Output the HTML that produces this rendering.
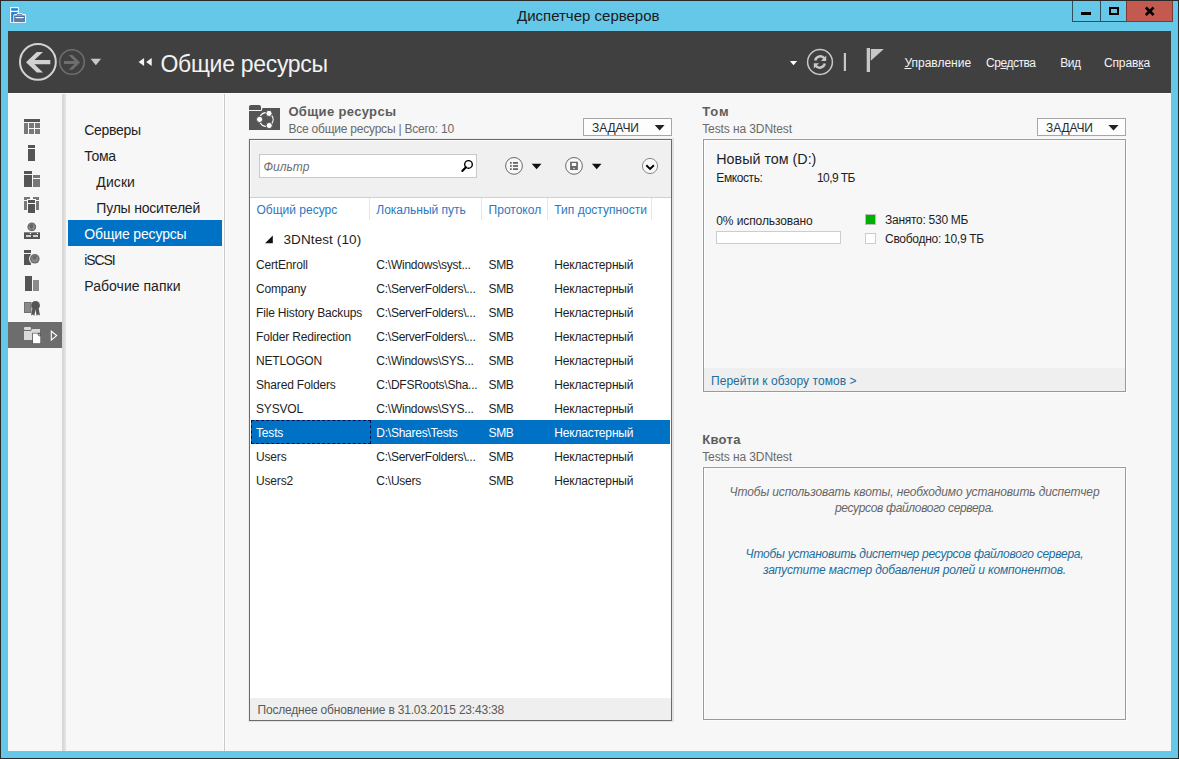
<!DOCTYPE html>
<html><head><meta charset="utf-8">
<style>
*{margin:0;padding:0;box-sizing:border-box}
html,body{width:1179px;height:759px;overflow:hidden;background:#2a2a2a;font-family:"Liberation Sans",sans-serif}
.a{position:absolute}
.t{position:absolute;white-space:nowrap;font-family:"Liberation Sans",sans-serif}
#frame{position:absolute;left:1px;top:1px;width:1177px;height:757px;background:#66c8e8}
#content{position:absolute;left:8px;top:31px;width:1163px;height:720px;background:#f7f7f7;overflow:hidden}
#hdr{position:absolute;left:8px;top:31px;width:1163px;height:62px;background:#404040}
.wb{position:absolute;top:1px;height:21px;border:1px solid #2f4f5a;border-top:0}
.mn{top:56.9px;font-size:12px;line-height:12px;color:#f4f4f4}
.mn u{text-decoration-thickness:1px;text-underline-offset:1px}
.nv{font-size:14px;line-height:14px;letter-spacing:-0.3px;color:#1e1e1e}
.ch{top:204.1px;font-size:12px;line-height:12px;color:#2b78c0}
.rw{font-size:12px;line-height:12px;letter-spacing:-0.17px}
.qt{left:704px;width:421px;text-align:center;font-size:12px;line-height:12px;font-style:italic}
</style></head><body>
<div id="frame"></div>
<!-- title bar icon -->
<svg class="a" style="left:8px;top:5px" width="20" height="20" viewBox="8 5 20 20">
  <rect x="10.1" y="7.1" width="8.7" height="15.6" fill="#fff"/>
  <rect x="11.2" y="8.2" width="6.7" height="2.5" fill="#1a7fd8"/>
  <rect x="11.2" y="12.1" width="6.7" height="9.8" fill="#1a7fd8"/>
  <path d="M13.3,15.5 Q13.3,14.3 14.8,14.1 L16.3,13.9 Q16.8,12.9 18.5,12.9 L20.5,12.9 Q22.2,12.9 22.6,13.9 L24.4,14.1 Q25.9,14.3 25.9,15.5 L25.9,22.65 L13.3,22.65 Z" fill="#fff"/>
  <rect x="14.2" y="15.4" width="10.7" height="6.5" fill="#4c6aa6"/>
  <path d="M17.2,15.4 L17.2,14.4 L21.8,14.4 L21.8,15.4" fill="none" stroke="#4c6aa6" stroke-width="0.9"/>
  <path d="M15,17.1 L24.1,17.1 L23.2,18.3 L15.9,18.3 Z" fill="#fff"/>
  <rect x="14.5" y="18.8" width="10" height="2.8" fill="#5f8a9a" opacity="0.7"/>
</svg>
<div class="t" style="left:517px;top:8px;font-size:15px;line-height:15px;color:#1a1a1a">Диспетчер серверов</div>
<!-- window buttons -->
<div class="wb" style="left:1072px;width:29px;background:#66c8e8"></div>
<div class="wb" style="left:1100px;width:27px;background:#66c8e8"></div>
<div class="wb" style="left:1126px;width:47px;background:#c45a4f;border-color:#7a3a33"></div>
<div class="a" style="left:1081px;top:12px;width:10px;height:3px;background:#000"></div>
<div class="a" style="left:1109px;top:7px;width:10px;height:8px;border:2px solid #000"></div>
<svg class="a" style="left:1144px;top:6px" width="12" height="11" viewBox="1144 6 12 11"><path d="M1145.8,7.6 L1153.6,14.9 M1153.6,7.6 L1145.8,14.9" stroke="#000" stroke-width="2.7"/></svg>

<div id="content"></div>
<div id="hdr"></div>
    <svg class="a" style="left:8px;top:31px" width="1163" height="62" viewBox="8 31 1163 62">
      <circle cx="37.9" cy="61.9" r="17.9" fill="none" stroke="#d2d2d2" stroke-width="2"/>
      <path d="M26,62.2 L36.8,52 L43,52 L34.4,60.1 L50.3,60.1 L50.3,64.3 L34.4,64.3 L43,72.5 L36.8,72.5 Z" fill="#d2d2d2"/>
      <circle cx="72" cy="62" r="12.3" fill="none" stroke="#6e6e6e" stroke-width="1.6"/>
      <path d="M80,62.4 L72.5,55 L68.6,55 L74.6,60.9 L63.9,60.9 L63.9,64 L74.6,64 L68.6,69.8 L72.5,69.8 Z" fill="#6e6e6e"/>
      <path d="M90.6,58.8 L101.1,58.8 L95.85,65.2 Z" fill="#c8c8c8"/>
      <path d="M138.6,62 L144.1,57.9 L144.1,66.1 Z M146.2,62 L151.7,57.9 L151.7,66.1 Z" fill="#f4f4f4"/>
      <path d="M789.9,60.9 L797.1,60.9 L793.5,65.3 Z" fill="#fff"/>
      <circle cx="820" cy="62" r="12.4" fill="none" stroke="#c8c8c8" stroke-width="1.5"/>
      <path d="M815.2,60.5 A5.2,5.2 0 0 1 824.5,58.5" fill="none" stroke="#c8c8c8" stroke-width="2.4"/>
      <path d="M826.2,55.6 L826.2,61 L821,61 Z" fill="#c8c8c8"/>
      <path d="M824.8,63.5 A5.2,5.2 0 0 1 815.5,65.5" fill="none" stroke="#c8c8c8" stroke-width="2.4"/>
      <path d="M813.8,68.6 L813.8,63.2 L819,63.2 Z" fill="#c8c8c8"/>
      <rect x="843.8" y="53" width="2.2" height="18" fill="#c8c8c8"/>
      <rect x="866.7" y="48" width="3.3" height="24" fill="#c8c8c8"/>
      <path d="M870.8,49 L883.8,49 L870.8,60.7 Z" fill="#c8c8c8"/>
    </svg>
    <div class="t" style="left:160.5px;top:53px;font-size:23px;line-height:23px;letter-spacing:-0.3px;color:#f2f2f2">Общие ресурсы</div>
    <div class="t mn" style="left:904.4px"><u>У</u>правление</div>
    <div class="t mn" style="left:986px;letter-spacing:-0.45px">Ср<u>е</u>дства</div>
    <div class="t mn" style="left:1060.2px;letter-spacing:-0.5px">Ви<u>д</u></div>
    <div class="t mn" style="left:1104px;letter-spacing:-0.15px">Справ<u>к</u>а</div>

<!-- left icon rail -->
<div class="a" style="left:8px;top:93px;width:1163px;height:1px;background:#fbfbfb"></div>
<div class="a" style="left:62px;top:94px;width:4px;height:657px;background:linear-gradient(90deg,#d3d3d3,#dedede 60%,#e6e6e6)"></div>
<div class="a" style="left:223px;top:94px;width:3px;height:657px;background:linear-gradient(90deg,#fdfdfd 0,#fdfdfd 1px,#c9c9c9 1px,#c9c9c9 2px,#fdfdfd 2px)"></div>
<div class="a" style="left:8px;top:322px;width:54px;height:26px;background:#6d6d6d"></div>
<svg class="a" style="left:8px;top:94px" width="54" height="260" viewBox="8 94 54 260">
  <g fill="#555">
    <rect x="24" y="119" width="16" height="3"/>
    <rect x="28" y="145" width="7" height="3"/><rect x="28" y="149" width="7" height="12"/>
    <rect x="24" y="171" width="8" height="3"/><rect x="24" y="175" width="8" height="12"/>
    <rect x="28" y="200" width="7" height="3"/><rect x="28" y="204" width="7" height="9"/>
    <rect x="24" y="232" width="16" height="7"/>
    <rect x="24" y="250" width="7" height="3"/><rect x="24" y="254" width="7" height="11"/>
    <rect x="25" y="276" width="7" height="15"/>
    <circle cx="35.5" cy="305.4" r="4.4"/>
    <path d="M32.3,308.5 L31,315.5 L33,314.5 L34.3,316 L35.5,309.5 Z M38.7,308.5 L40,315.5 L38,314.5 L36.7,316 L35.5,309.5 Z"/>
  </g>
  <g fill="#787878">
    <rect x="24" y="123" width="4" height="11"/>
    <rect x="29" y="123" width="5" height="5"/><rect x="29" y="129" width="5" height="5"/>
    <rect x="35" y="123" width="5" height="5"/><rect x="35" y="129" width="5" height="5"/>
    <rect x="33" y="175" width="7" height="3"/><rect x="33" y="179" width="7" height="8"/>
    <rect x="24" y="197" width="6" height="3"/><rect x="24" y="201" width="3" height="9"/>
    <rect x="33" y="197" width="6" height="3"/><rect x="36" y="201" width="3" height="9"/>
    <rect x="27" y="199" width="9" height="15" fill="#fafafa"/>
    <rect x="28" y="200" width="7" height="3" fill="#555"/><rect x="28" y="204" width="7" height="9" fill="#555"/>
    <circle cx="31.8" cy="226.9" r="5.4" fill="#fbfbfb"/>
    <circle cx="31.8" cy="226.9" r="4.4" fill="#6a6a6a"/>
    <circle cx="31.8" cy="226.9" r="3.2" fill="#8a8a8a"/>
    <rect x="33" y="280" width="6" height="11" fill="#8a8a8a"/>
    <rect x="24.5" y="302.5" width="6.5" height="10" fill="#8a8a8a" stroke="#707070" stroke-width="1"/>
  </g>
  <g fill="#d2d2d2">
    <rect x="26" y="235" width="5" height="2"/><rect x="33" y="235" width="5" height="2"/>
  </g>
  <path d="M29,225.5 L31,224 L33,224.5 L33.5,226.5 L32,228 L32.5,230 L30.5,228 Z" fill="#555" opacity="0.7"/>
  <rect x="24" y="231.5" width="16" height="0.8" fill="#fbfbfb"/>
  <circle cx="30.4" cy="233.4" r="0.7" fill="#fff"/><circle cx="37.4" cy="233.4" r="0.7" fill="#fff"/>
  <circle cx="34.8" cy="258.8" r="5.8" fill="#f7f7f7"/>
  <circle cx="34.8" cy="258.8" r="4.8" fill="#6a6a6a"/>
  <circle cx="34.8" cy="258.8" r="3.5" fill="#8a8a8a"/>
  <path d="M32,257.5 L34,255.5 L37,256 L36,259 L34,260 L35,262 Z" fill="#555" opacity="0.6"/>
  <!-- selected icon -->
  <rect x="24" y="327" width="7" height="3" rx="1" fill="#dadada"/>
  <path d="M24,331 L31,331 L32,329 L40,329 L40,340 L24,340 Z" fill="#dadada"/>
  <path d="M32.2,332.8 L41,332.8 L41,344 L32.2,344 Z" fill="#5a5a5a"/><path d="M33,333.4 L37.6,333.4 Q37.6,336.2 40.3,336.2 L40.3,343.3 L33,343.3 Z" fill="#fff"/><circle cx="39.3" cy="334.8" r="0.8" fill="#ddd"/>
  <path d="M51.3,331.2 L56.7,335.6 L51.3,340 Z" fill="none" stroke="#fff" stroke-width="1.1"/>
</svg>
<!-- nav -->
<div class="a" style="left:68px;top:220px;width:154px;height:26px;background:#0072c6"></div>
<div class="t nv" style="left:84.3px;top:123.2px">Серверы</div>
<div class="t nv" style="left:84.3px;top:149.2px">Тома</div>
<div class="t nv" style="left:96.3px;top:175.2px;letter-spacing:0.1px">Диски</div>
<div class="t nv" style="left:96.3px;top:201.2px;letter-spacing:-0.2px">Пулы носителей</div>
<div class="t nv" style="left:84.3px;top:227.2px;color:#fff;letter-spacing:-0.15px">Общие ресурсы</div>
<div class="t nv" style="left:84.3px;top:253.2px;letter-spacing:-1.1px">iSCSI</div>
<div class="t nv" style="left:84.3px;top:279.2px;letter-spacing:0.03px">Рабочие папки</div>

<!-- left main panel -->
<svg class="a" style="left:249px;top:105px" width="31" height="25" viewBox="249 105 31 25">
  <path d="M249,107 Q249,105 251,105 L259,105 Q261,105 261,107 L261,110 L249,110 Z" fill="#555"/>
  <path d="M249,111 L261.5,111 L262.5,108 L280,108 L280,130 L249,130 Z" fill="#555"/>
  <path d="M260.14,116.62 A6.8,6.8 0 0 1 266.18,112.7 M271.43,115.04 A6.8,6.8 0 0 1 271.58,123.78 M266.42,126.3 A6.8,6.8 0 0 1 260.14,122.38" fill="none" stroke="#fff" stroke-width="1.2"/>
  <circle cx="269" cy="113.4" r="3.1" fill="#fff" stroke="#555" stroke-width="1"/>
  <circle cx="259.6" cy="119.4" r="3.1" fill="#fff" stroke="#555" stroke-width="1"/>
  <circle cx="269.2" cy="125.5" r="3.1" fill="#fff" stroke="#555" stroke-width="1"/>
</svg>
<div class="t" style="left:288.4px;top:104.7px;font-size:13px;line-height:13px;font-weight:bold;color:#5c5c5c;letter-spacing:0.35px">Общие ресурсы</div>
<div class="t" style="left:288.4px;top:122.6px;font-size:12px;line-height:12px;color:#6a6a6a;letter-spacing:-0.22px">Все общие ресурсы | Всего: 10</div>
<div class="a" style="left:583px;top:118px;width:89px;height:18px;background:#fdfdfd;border:1px solid #a6a6a6"></div>
<div class="t" style="left:592px;top:121.7px;font-size:12px;line-height:12px;color:#2a2a2a;letter-spacing:-0.1px">ЗАДАЧИ</div>
<svg class="a" style="left:654px;top:124px" width="12" height="8"><path d="M0.7,1 L10.6,1 L5.65,6.5 Z" fill="#222"/></svg>

<div class="a" style="left:248px;top:138px;width:426px;height:584px;border:1px solid #ececec;border-right-width:2px;border-bottom-width:2px;border-right-color:#e2e2e2;border-bottom-color:#e2e2e2"></div>
<div class="a" style="left:249px;top:139px;width:423px;height:582px;background:#fff;border:1px solid #6b6b6b"></div>
<div class="a" style="left:250px;top:140px;width:421px;height:57px;background:#f0f0f0;border-top:1px solid #fbfbfb;border-left:1px solid #fbfbfb"></div>
<div class="a" style="left:250px;top:197px;width:421px;height:1px;background:#cfcfcf"></div>
<div class="a" style="left:259px;top:154px;width:218px;height:24px;background:#fff;border:1px solid #c9c9c9"></div>
<div class="t" style="left:263.5px;top:161px;font-size:12px;line-height:12px;font-style:italic;color:#6e6e6e">Фильтр</div>
<svg class="a" style="left:455px;top:155px" width="22" height="22" viewBox="455 155 22 22">
  <circle cx="468.5" cy="164.4" r="3.8" fill="none" stroke="#000" stroke-width="1.4"/>
  <path d="M465.9,167.2 L462.3,170.9" stroke="#000" stroke-width="2.1" stroke-linecap="round"/>
</svg>
<svg class="a" style="left:500px;top:150px" width="165" height="32" viewBox="500 150 165 32">
  <circle cx="514" cy="165.9" r="8.4" fill="#f7f7f7" stroke="#6a6a6a" stroke-width="1"/>
  <g fill="#555"><rect x="510" y="162.1" width="1.7" height="1.6"/><rect x="510" y="165.2" width="1.7" height="1.6"/><rect x="510" y="168.3" width="1.7" height="1.6"/>
  <rect x="513" y="162.1" width="5" height="1.6"/><rect x="513" y="165.2" width="5" height="1.6"/><rect x="513" y="168.3" width="5" height="1.6"/></g>
  <path d="M531.7,163.8 L541.5,163.8 L536.6,169.3 Z" fill="#111"/>
  <circle cx="574" cy="165.9" r="8.4" fill="#f7f7f7" stroke="#6a6a6a" stroke-width="1"/>
  <path d="M570.1,161.8 L577.9,161.8 L577.9,169.9 L570.1,169.9 Z M571.8,163 L571.8,166 L576.2,166 L576.2,163 Z M573.3,167.7 L573.3,169.1 L574.7,169.1 L574.7,167.7 Z" fill="#666" fill-rule="evenodd"/>
  <path d="M591.9,163.8 L601.5,163.8 L596.7,169.3 Z" fill="#111"/>
  <circle cx="650" cy="166" r="7.6" fill="#f9f9f9" stroke="#8a8a8a" stroke-width="1"/>
  <path d="M646.3,165.2 L650.1,168.9 L653.9,165.2" fill="none" stroke="#000" stroke-width="1.9"/>
</svg>
<!-- column headers -->
<div class="a" style="left:369px;top:198px;width:1px;height:22px;background:#e6e6e6"></div>
<div class="a" style="left:481px;top:198px;width:1px;height:22px;background:#e6e6e6"></div>
<div class="a" style="left:547px;top:198px;width:1px;height:22px;background:#e6e6e6"></div>
<div class="a" style="left:651px;top:198px;width:1px;height:22px;background:#e6e6e6"></div>
<div class="t ch" style="left:256.5px">Общий ресурс</div>
<div class="t ch" style="left:376.3px">Локальный путь</div>
<div class="t ch" style="left:488.6px">Протокол</div>
<div class="t ch" style="left:554.3px">Тип доступности</div>
<svg class="a" style="left:264px;top:234px" width="10" height="10"><path d="M1.1,9.3 L8.8,9.3 L8.8,1.6 Z" fill="#111"/></svg>
<div class="t" style="left:283.5px;top:233px;font-size:13.5px;line-height:13.5px;color:#1e1e1e;letter-spacing:0.1px">3DNtest (10)</div>
<div class="a" style="left:251px;top:420px;width:419px;height:24px;background:#0072c6"></div>
<div class="a" style="left:251px;top:420px;width:120px;height:24px;border:1px dashed #0a1050"></div>
<div class="t rw" style="left:256px;top:258.5px;color:#1e1e1e">CertEnroll</div><div class="t rw" style="letter-spacing:-0.24px;left:376.3px;top:258.5px;color:#1e1e1e">C:\Windows\syst...</div><div class="t rw" style="letter-spacing:-0.4px;left:488.6px;top:258.5px;color:#1e1e1e">SMB</div><div class="t rw" style="left:554.3px;top:258.5px;color:#1e1e1e">Некластерный</div>
<div class="t rw" style="left:256px;top:282.5px;color:#1e1e1e">Company</div><div class="t rw" style="letter-spacing:-0.24px;left:376.3px;top:282.5px;color:#1e1e1e">C:\ServerFolders\...</div><div class="t rw" style="letter-spacing:-0.4px;left:488.6px;top:282.5px;color:#1e1e1e">SMB</div><div class="t rw" style="left:554.3px;top:282.5px;color:#1e1e1e">Некластерный</div>
<div class="t rw" style="left:256px;top:306.5px;color:#1e1e1e">File History Backups</div><div class="t rw" style="letter-spacing:-0.24px;left:376.3px;top:306.5px;color:#1e1e1e">C:\ServerFolders\...</div><div class="t rw" style="letter-spacing:-0.4px;left:488.6px;top:306.5px;color:#1e1e1e">SMB</div><div class="t rw" style="left:554.3px;top:306.5px;color:#1e1e1e">Некластерный</div>
<div class="t rw" style="left:256px;top:330.5px;color:#1e1e1e">Folder Redirection</div><div class="t rw" style="letter-spacing:-0.24px;left:376.3px;top:330.5px;color:#1e1e1e">C:\ServerFolders\...</div><div class="t rw" style="letter-spacing:-0.4px;left:488.6px;top:330.5px;color:#1e1e1e">SMB</div><div class="t rw" style="left:554.3px;top:330.5px;color:#1e1e1e">Некластерный</div>
<div class="t rw" style="left:256px;top:354.5px;color:#1e1e1e">NETLOGON</div><div class="t rw" style="letter-spacing:-0.24px;left:376.3px;top:354.5px;color:#1e1e1e">C:\Windows\SYS...</div><div class="t rw" style="letter-spacing:-0.4px;left:488.6px;top:354.5px;color:#1e1e1e">SMB</div><div class="t rw" style="left:554.3px;top:354.5px;color:#1e1e1e">Некластерный</div>
<div class="t rw" style="left:256px;top:378.5px;color:#1e1e1e">Shared Folders</div><div class="t rw" style="letter-spacing:-0.24px;left:376.3px;top:378.5px;color:#1e1e1e">C:\DFSRoots\Sha...</div><div class="t rw" style="letter-spacing:-0.4px;left:488.6px;top:378.5px;color:#1e1e1e">SMB</div><div class="t rw" style="left:554.3px;top:378.5px;color:#1e1e1e">Некластерный</div>
<div class="t rw" style="left:256px;top:402.5px;color:#1e1e1e">SYSVOL</div><div class="t rw" style="letter-spacing:-0.24px;left:376.3px;top:402.5px;color:#1e1e1e">C:\Windows\SYS...</div><div class="t rw" style="letter-spacing:-0.4px;left:488.6px;top:402.5px;color:#1e1e1e">SMB</div><div class="t rw" style="left:554.3px;top:402.5px;color:#1e1e1e">Некластерный</div>
<div class="t rw" style="left:256px;top:426.5px;color:#fff">Tests</div><div class="t rw" style="letter-spacing:-0.24px;left:376.3px;top:426.5px;color:#fff">D:\Shares\Tests</div><div class="t rw" style="letter-spacing:-0.4px;left:488.6px;top:426.5px;color:#fff">SMB</div><div class="t rw" style="left:554.3px;top:426.5px;color:#fff">Некластерный</div>
<div class="t rw" style="left:256px;top:450.5px;color:#1e1e1e">Users</div><div class="t rw" style="letter-spacing:-0.24px;left:376.3px;top:450.5px;color:#1e1e1e">C:\ServerFolders\...</div><div class="t rw" style="letter-spacing:-0.4px;left:488.6px;top:450.5px;color:#1e1e1e">SMB</div><div class="t rw" style="left:554.3px;top:450.5px;color:#1e1e1e">Некластерный</div>
<div class="t rw" style="left:256px;top:474.5px;color:#1e1e1e">Users2</div><div class="t rw" style="letter-spacing:-0.24px;left:376.3px;top:474.5px;color:#1e1e1e">C:\Users</div><div class="t rw" style="letter-spacing:-0.4px;left:488.6px;top:474.5px;color:#1e1e1e">SMB</div><div class="t rw" style="left:554.3px;top:474.5px;color:#1e1e1e">Некластерный</div>

<div class="a" style="left:250px;top:698px;width:421px;height:22px;background:#efefef"></div>
<div class="t" style="left:257.6px;top:703.5px;font-size:12px;line-height:12px;color:#5a5a5a;letter-spacing:-0.2px">Последнее обновление в 31.03.2015 23:43:38</div>

<!-- right: Том -->
<div class="t" style="left:702.2px;top:104.7px;font-size:13px;line-height:13px;font-weight:bold;color:#5c5c5c;letter-spacing:0.9px">Том</div>
<div class="t" style="left:702.2px;top:123px;font-size:12px;line-height:12px;color:#6a6a6a;letter-spacing:-0.1px">Tests на 3DNtest</div>
<div class="a" style="left:1037px;top:118px;width:89px;height:18px;background:#fdfdfd;border:1px solid #a6a6a6"></div>
<div class="t" style="left:1046px;top:121.5px;font-size:12px;line-height:12px;color:#2a2a2a;letter-spacing:-0.1px">ЗАДАЧИ</div>
<svg class="a" style="left:1108px;top:124px" width="12" height="8"><path d="M0.4,1 L10.6,1 L5.5,6.4 Z" fill="#222"/></svg>
<div class="a" style="left:702px;top:138px;width:425px;height:255px;border:1px solid #fdfdfd"></div>
<div class="a" style="left:703px;top:139px;width:423px;height:253px;border:1px solid #9a9a9a"></div>
<div class="a" style="left:704px;top:140px;width:421px;height:1px;background:#fdfdfd"></div>
<div class="a" style="left:704px;top:140px;width:1px;height:228px;background:#fdfdfd"></div>
<div class="t" style="left:716.3px;top:152px;font-size:14.3px;line-height:14.3px;color:#1e1e1e">Новый том (D:)</div>
<div class="t" style="left:716.3px;top:171.9px;font-size:12px;line-height:12px;color:#1e1e1e;letter-spacing:-0.4px">Емкость:</div>
<div class="t" style="left:817px;top:171.9px;font-size:12px;line-height:12px;color:#1e1e1e;letter-spacing:-0.6px">10,9 ТБ</div>
<div class="t" style="left:716.3px;top:214.8px;font-size:12px;line-height:12px;color:#1e1e1e;letter-spacing:-0.1px">0% использовано</div>
<div class="a" style="left:716px;top:231px;width:125px;height:13px;background:#fff;border:1px solid #cdcdcd"></div>
<div class="a" style="left:865px;top:214px;width:11px;height:11px;background:#00b000;border:1px solid #bdbdbd"></div>
<div class="a" style="left:865px;top:233px;width:11px;height:11px;background:#fff;border:1px solid #cdcdcd"></div>
<div class="t" style="left:885px;top:213.8px;font-size:12px;line-height:12px;color:#1e1e1e;letter-spacing:-0.27px">Занято: 530 МБ</div>
<div class="t" style="left:885px;top:232.6px;font-size:12px;line-height:12px;color:#1e1e1e;letter-spacing:-0.28px">Свободно: 10,9 ТБ</div>
<div class="a" style="left:704px;top:368px;width:421px;height:23px;background:#efefef"></div>
<div class="t" style="left:711px;top:374.6px;font-size:12px;line-height:12px;color:#1b6d9c;letter-spacing:0.05px">Перейти к обзору томов &gt;</div>

<!-- right: Квота -->
<div class="t" style="left:702.2px;top:433px;font-size:13px;line-height:13px;font-weight:bold;color:#5c5c5c;letter-spacing:0.3px">Квота</div>
<div class="t" style="left:702.2px;top:450.8px;font-size:12px;line-height:12px;color:#6a6a6a;letter-spacing:-0.1px">Tests на 3DNtest</div>
<div class="a" style="left:702px;top:466px;width:425px;height:255px;border:1px solid #fdfdfd"></div>
<div class="a" style="left:703px;top:467px;width:423px;height:253px;border:1px solid #9a9a9a"></div>
<div class="a" style="left:704px;top:468px;width:421px;height:1px;background:#fdfdfd"></div>
<div class="a" style="left:704px;top:468px;width:1px;height:251px;background:#fdfdfd"></div>
<div class="t qt" style="top:486.3px;color:#666;letter-spacing:-0.13px">Чтобы использовать квоты, необходимо установить диспетчер</div>
<div class="t qt" style="top:501.8px;color:#666;letter-spacing:-0.33px">ресурсов файлового сервера.</div>
<div class="t qt" style="top:547.6px;color:#1b6d9c;letter-spacing:-0.25px">Чтобы установить диспетчер ресурсов файлового сервера,</div>
<div class="t qt" style="top:564.1px;color:#1b6d9c;letter-spacing:-0.15px">запустите мастер добавления ролей и компонентов.</div>
</body></html>
